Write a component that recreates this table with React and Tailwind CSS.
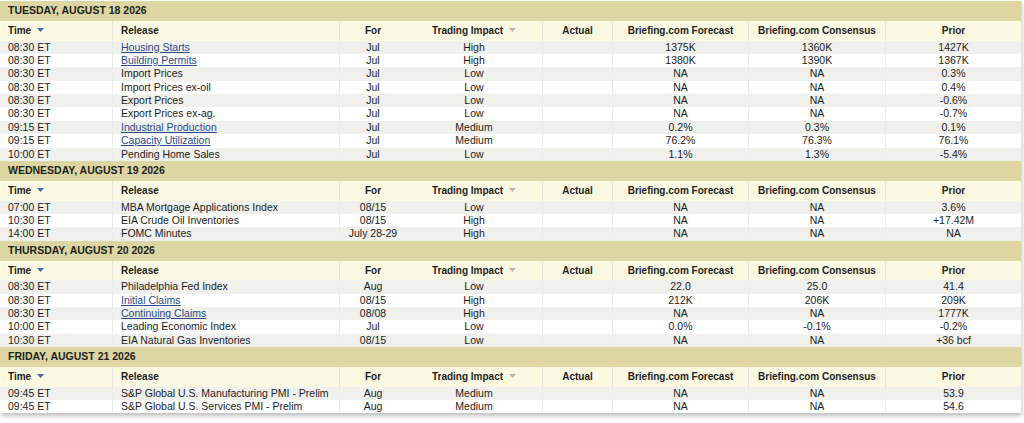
import React from "react"

const days = [
	{
		title: "TUESDAY, AUGUST 18 2026",
		rows: [
			["08:30 ET", "Housing Starts", "Jul", "High", "", "1375K", "1360K", "1427K", true],
			["08:30 ET", "Building Permits", "Jul", "High", "", "1380K", "1390K", "1367K", true],
			["08:30 ET", "Import Prices", "Jul", "Low", "", "NA", "NA", "0.3%"],
			["08:30 ET", "Import Prices ex-oil", "Jul", "Low", "", "NA", "NA", "0.4%"],
			["08:30 ET", "Export Prices", "Jul", "Low", "", "NA", "NA", "-0.6%"],
			["08:30 ET", "Export Prices ex-ag.", "Jul", "Low", "", "NA", "NA", "-0.7%"],
			["09:15 ET", "Industrial Production", "Jul", "Medium", "", "0.2%", "0.3%", "0.1%", true],
			["09:15 ET", "Capacity Utilization", "Jul", "Medium", "", "76.2%", "76.3%", "76.1%", true],
			["10:00 ET", "Pending Home Sales", "Jul", "Low", "", "1.1%", "1.3%", "-5.4%"],
		],
	},
	{
		title: "WEDNESDAY, AUGUST 19 2026",
		rows: [
			["07:00 ET", "MBA Mortgage Applications Index", "08/15", "Low", "", "NA", "NA", "3.6%"],
			["10:30 ET", "EIA Crude Oil Inventories", "08/15", "High", "", "NA", "NA", "+17.42M"],
			["14:00 ET", "FOMC Minutes", "July 28-29", "High", "", "NA", "NA", "NA"],
		],
	},
	{
		title: "THURSDAY, AUGUST 20 2026",
		rows: [
			["08:30 ET", "Philadelphia Fed Index", "Aug", "Low", "", "22.0", "25.0", "41.4"],
			["08:30 ET", "Initial Claims", "08/15", "High", "", "212K", "206K", "209K", true],
			["08:30 ET", "Continuing Claims", "08/08", "High", "", "NA", "NA", "1777K", true],
			["10:00 ET", "Leading Economic Index", "Jul", "Low", "", "0.0%", "-0.1%", "-0.2%"],
			["10:30 ET", "EIA Natural Gas Inventories", "08/15", "Low", "", "NA", "NA", "+36 bcf"],
		],
	},
	{
		title: "FRIDAY, AUGUST 21 2026",
		rows: [
			["09:45 ET", "S&P Global U.S. Manufacturing PMI - Prelim", "Aug", "Medium", "", "NA", "NA", "53.9"],
			["09:45 ET", "S&P Global U.S. Services PMI - Prelim", "Aug", "Medium", "", "NA", "NA", "54.6"],
		],
	},
]

const cols = "grid grid-cols-[113px_227px_66px_137px_70px_136px_137px_135px]"
const head = "border-r border-[#e6e6de] last:border-r-0"
const cell = "border-r border-[#ecece8] last:border-r-0"

function SortArrow({ blue }) {
	return (
		<svg
			width="7"
			height="4"
			viewBox="0 0 7 4"
			className="inline-block ml-[6px] mb-[1px]"
		>
			<path d="M0 0 L7 0 L3.5 4 Z" fill={blue ? "#3f6fa8" : "#b5b5b0"} />
		</svg>
	)
}

function HeaderRow() {
	return (
		<div className={`${cols} h-[19.5px] bg-[#fcf9e2] font-bold text-[10px] items-stretch`}>
			<div className={`${head} pl-2 flex items-center`}>
				Time <SortArrow blue />
			</div>
			<div className={`${head} pl-2 flex items-center`}>Release</div>
			<div className="flex items-center justify-center">For</div>
			<div className={`${head} flex items-center justify-center`}>
				Trading Impact <SortArrow />
			</div>
			<div className={`${head} flex items-center justify-center`}>Actual</div>
			<div className={`${head} flex items-center justify-center`}>Briefing.com Forecast</div>
			<div className={`${head} flex items-center justify-center`}>Briefing.com Consensus</div>
			<div className={`${head} flex items-center justify-center`}>Prior</div>
		</div>
	)
}

function DataRow({ row, index }) {
	const [time, release, period, impact, actual, forecast, consensus, prior, link] = row
	return (
		<div
			className={`${cols} h-[13.4px] leading-[13.4px] ${
				index % 2 === 0 ? "bg-[#f0f0ec]" : "bg-white"
			}`}
		>
			<div className={`${cell} pl-2`}>{time}</div>
			<div className={`${cell} pl-2 whitespace-nowrap`}>
				{link ? (
					<a href="#" className="text-[#28498a] underline">
						{release}
					</a>
				) : (
					release
				)}
			</div>
			<div className="text-center">{period}</div>
			<div className={`${cell} text-center`}>{impact}</div>
			<div className={`${cell} text-center`}>{actual}</div>
			<div className={`${cell} text-center`}>{forecast}</div>
			<div className={`${cell} text-center`}>{consensus}</div>
			<div className={`${cell} text-center`}>{prior}</div>
		</div>
	)
}

export default function App() {
	return (
		<div
			className="w-[1024px] h-[423px] bg-white text-[#1c1c1c] text-[10.5px] overflow-hidden pt-[1px]"
			style={{ fontFamily: '"Liberation Sans", Arial, sans-serif' }}
		>
			<div className="w-[1022px] border-r border-[#e2e2dc] shadow-[0_3px_4px_rgba(0,0,0,0.25)] rounded-b-sm">
				{days.map((day) => (
					<div key={day.title}>
						<div className="h-[20px] bg-[#ddd6a2] pl-2 flex items-center font-bold text-[10.5px] text-[#1e1e1e]">
							{day.title}
						</div>
						<HeaderRow />
						{day.rows.map((row, i) => (
							<DataRow key={i} row={row} index={i} />
						))}
					</div>
				))}
			</div>
		</div>
	)
}
